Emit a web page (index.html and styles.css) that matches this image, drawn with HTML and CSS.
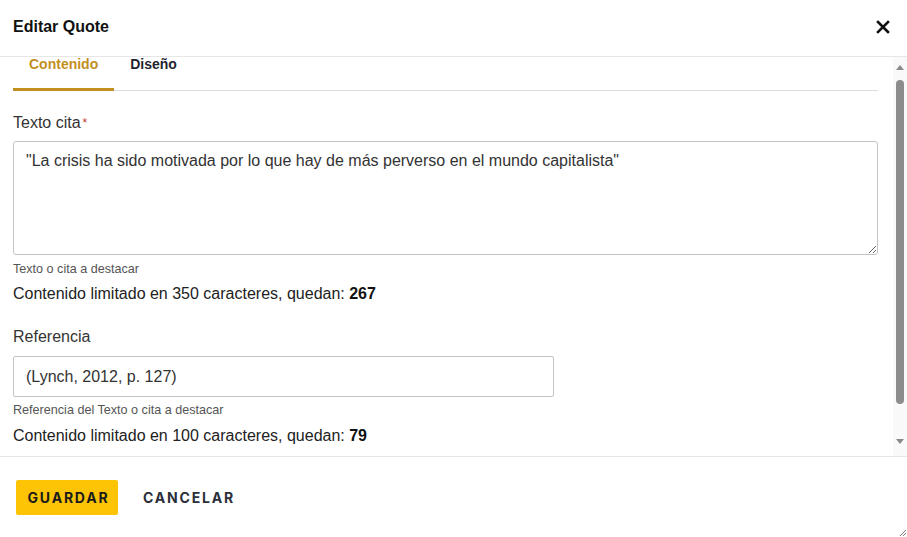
FILE: index.html
```html
<!DOCTYPE html>
<html lang="es">
<head>
    <meta charset="UTF-8">
    <meta name="viewport" content="width=device-width, initial-scale=1.0">
    <title>Editar Quote</title>
    <link rel="stylesheet" href="styles.css">
</head>
<body>
    <div class="modal">
        <div class="modal-header">
            <h3>Editar Quote</h3>
            <button class="close" aria-label="Cerrar">
                <svg width="14" height="14" viewBox="0 0 14 14">
                    <path d="M2 2 L12 12 M12 2 L2 12" stroke="#111" stroke-width="2.6" stroke-linecap="square"/>
                </svg>
            </button>
        </div>

        <div class="modal-body">
            <div class="content">
                <div class="tabs">
                    <span class="tab active">Contenido</span>
                    <span class="tab">Diseño</span>
                </div>

                <label class="field-label">Texto cita<span class="req">*</span></label>
                <textarea class="textarea">"La crisis ha sido motivada por lo que hay de más perverso en el mundo capitalista"</textarea>
                <p class="help">Texto o cita a destacar</p>
                <p class="counter">Contenido limitado en 350 caracteres, quedan: <b>267</b></p>

                <label class="field-label ref">Referencia</label>
                <input class="input" type="text" value="(Lynch, 2012, p. 127)">
                <p class="help help-ref">Referencia del Texto o cita a destacar</p>
                <p class="counter">Contenido limitado en 100 caracteres, quedan: <b>79</b></p>
            </div>

            <!-- scrollbar -->
            <div class="scrollbar">
                <span class="arrow up"></span>
                <div class="track"><div class="thumb"></div></div>
                <span class="arrow down"></span>
            </div>
        </div>

        <div class="modal-footer">
            <button class="btn btn-primary">GUARDAR</button>
            <button class="btn btn-link">CANCELAR</button>
        </div>

        <svg class="grip" width="8" height="8" viewBox="0 0 8 8">
            <path d="M7 1 L1 7 M7 4 L4 7" stroke="#777" stroke-width="1"/>
        </svg>
    </div>
</body>
</html>
```

FILE: styles.css
```css
* {
    margin: 0;
    padding: 0;
    box-sizing: border-box;
}
body {
    font-family: "Liberation Sans", Arial, sans-serif;
    background: #fff;
    color: #333;
    width: 907px;
    height: 537px;
    overflow: hidden;
}
.modal {
    position: relative;
    height: 537px;
    display: flex;
    flex-direction: column;
}
.modal-header {
    height: 57px;
    border-bottom: 1px solid #e6e6e6;
    display: flex;
    align-items: center;
    justify-content: space-between;
    padding: 0 17px 2px 13px;
}
.modal-header h3 {
    font-size: 16px;
    font-weight: 700;
    color: #111;
}
.close {
    border: none;
    background: none;
    width: 14px;
    height: 14px;
    display: flex;
    cursor: pointer;
}
.modal-body {
    height: 400px;
    border-bottom: 1px solid #e6e6e6;
    display: flex;
    overflow: hidden;
}
.content {
    flex: 1;
    padding: 0 15px 0 13px;
}
.tabs {
    display: flex;
    height: 34px;
    border-bottom: 1px solid #dcdcdc;
}
.tab {
    font-size: 14px;
    font-weight: 700;
    line-height: 15px;
    color: #1f2430;
    padding: 0 16px 16px;
    height: 34px;
    border-bottom: 3px solid transparent;
}
.tab.active {
    color: #c38f1f;
    border-bottom-color: #c38f1f;
}
.field-label {
    display: block;
    font-size: 16px;
    line-height: 18px;
    color: #333;
    margin-top: 23px;
}
.field-label.ref {
    margin-top: 25px;
}
.req {
    color: #c0392b;
    font-size: 12px;
    vertical-align: top;
    margin-left: 2px;
}
.textarea {
    display: block;
    width: 100%;
    height: 114px;
    margin-top: 9px;
    border: 1px solid #c4c4c4;
    border-radius: 3px;
    padding: 10px 12px;
    font-family: "Liberation Sans", Arial, sans-serif;
    font-size: 16px;
    line-height: 18px;
    color: #333;
    resize: vertical;
}
.input {
    display: block;
    width: 541px;
    height: 41px;
    margin-top: 10px;
    border: 1px solid #c4c4c4;
    border-radius: 2px;
    padding: 0 12px;
    font-family: "Liberation Sans", Arial, sans-serif;
    font-size: 16px;
    color: #333;
}
.help {
    font-size: 12.6px;
    line-height: 14px;
    color: #555;
    margin-top: 7px;
}
.help-ref {
    margin-top: 6px;
}
.counter {
    font-size: 16px;
    line-height: 18px;
    color: #222;
    margin-top: 9px;
}
.help-ref + .counter {
    margin-top: 10px;
}
.counter b {
    color: #111;
}
/* fake scrollbar */
.scrollbar {
    width: 14px;
    background: #f9f9f9;
    display: flex;
    flex-direction: column;
    align-items: center;
    padding: 8px 0 12px;
}
.arrow {
    width: 0;
    height: 0;
    border-left: 4px solid transparent;
    border-right: 4px solid transparent;
}
.arrow.up {
    border-bottom: 5px solid #8a8a8a;
}
.arrow.down {
    border-top: 5px solid #8a8a8a;
}
.track {
    flex: 1;
    width: 100%;
    display: flex;
    justify-content: center;
    padding: 10px 0 35px;
}
.thumb {
    width: 8px;
    height: 100%;
    background: #8c8c8c;
    border-radius: 4px;
}
.modal-footer {
    flex: 1;
    display: flex;
    align-items: flex-start;
    gap: 15px;
    padding: 23px 16px 0;
}
.btn {
    font-family: Inter, "Liberation Sans", sans-serif;
    font-size: 14px;
    font-weight: 700;
    line-height: 15px;
    letter-spacing: 1.8px;
    padding: 10px 7px 10px 10px;
    border: none;
    border-radius: 2px;
    cursor: pointer;
}
.btn-primary {
    background: #fcc404;
    color: #1b1b1b;
    width: 102px;
}
.btn-link {
    background: none;
    color: #2b2f3a;
}
.grip {
    position: absolute;
    right: 0;
    bottom: 0;
}
```
